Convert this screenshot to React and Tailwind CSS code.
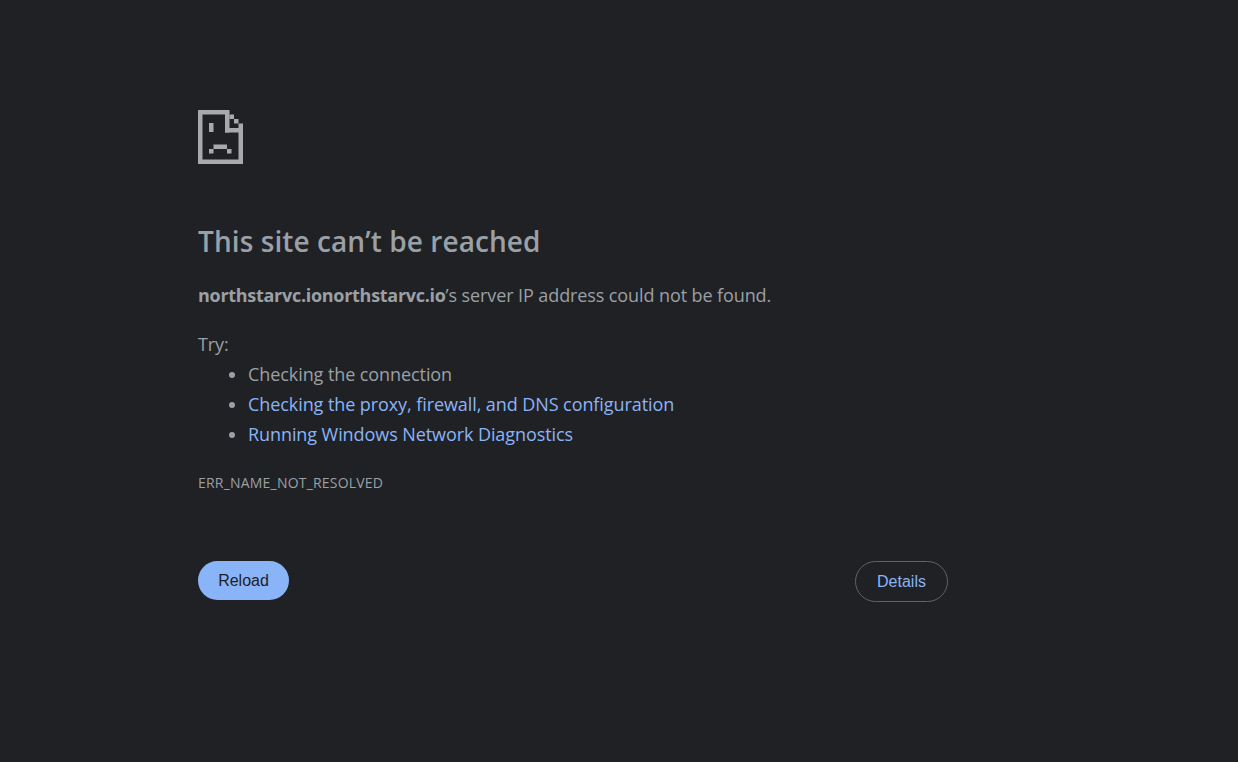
export default function App() {
  const c = "#a8a9aa";
  return (
    <div className="min-h-[762px] bg-[#202124] text-[#9aa0a6] font-['Open_Sans','Noto_Sans',sans-serif]">
      <div className="w-[750px] ml-[198px] pt-[110px] flex flex-col">
        <svg width="45" height="54" viewBox="0 0 45 54" className="block" fill={c}>
          <rect x="0" y="0" width="31" height="4.5" />
          <rect x="0" y="0" width="4.5" height="54" />
          <rect x="0" y="49.5" width="45" height="4.5" />
          <rect x="40.5" y="18" width="4.5" height="36" />
          <rect x="27" y="0" width="4.5" height="22.5" />
          <rect x="27" y="18" width="18" height="4.5" />
          <rect x="31.5" y="4.5" width="4.5" height="4.5" />
          <rect x="36" y="9" width="4.5" height="4.5" />
          <rect x="40.5" y="13.5" width="4.5" height="4.5" />
          <rect x="11" y="13" width="4.5" height="9" />
          <rect x="11" y="39" width="4.5" height="4.5" />
          <rect x="29" y="39" width="4.5" height="4.5" />
          <rect x="15.5" y="34.5" width="13.5" height="4.5" />
        </svg>
        <h1 className="mt-[59px] text-[28px] leading-[36px] font-semibold text-[#9aa0a6] tracking-[0.08px]">This site can’t be reached</h1>
        <p className="mt-[24px] text-[18px] leading-[24px] text-[#9aa0a6] tracking-[-0.1px]"><b className="font-bold tracking-[-0.29px]">northstarvc.ionorthstarvc.io</b>’s server IP address could not be found.</p>
        <p className="mt-[25px] text-[18px] leading-[24px] tracking-[-0.11px]">Try:</p>
        <ul className="mt-[3px] pl-[50px] list-disc text-[18px] leading-[30px] tracking-[-0.08px] marker:text-[#9aa0a6]">
          <li>Checking the connection</li>
          <li className="text-[#8ab4f8]">Checking the proxy, firewall, and DNS configuration</li>
          <li className="text-[#8ab4f8]">Running Windows Network Diagnostics</li>
        </ul>
        <div className="mt-[24px] text-[14px] leading-[20px] tracking-[0.2px]">ERR_NAME_NOT_RESOLVED</div>
        <div className="mt-[68px] flex items-start justify-between font-['Liberation_Sans',Arial,sans-serif] text-[16px]">
          <button className="w-[91px] h-[39px] rounded-[20px] bg-[#8ab4f8] text-[#202124]">Reload</button>
          <button className="w-[93px] h-[41px] rounded-[21px] border border-[#5f6368] text-[#8ab4f8]">Details</button>
        </div>
      </div>
    </div>
  );
}
